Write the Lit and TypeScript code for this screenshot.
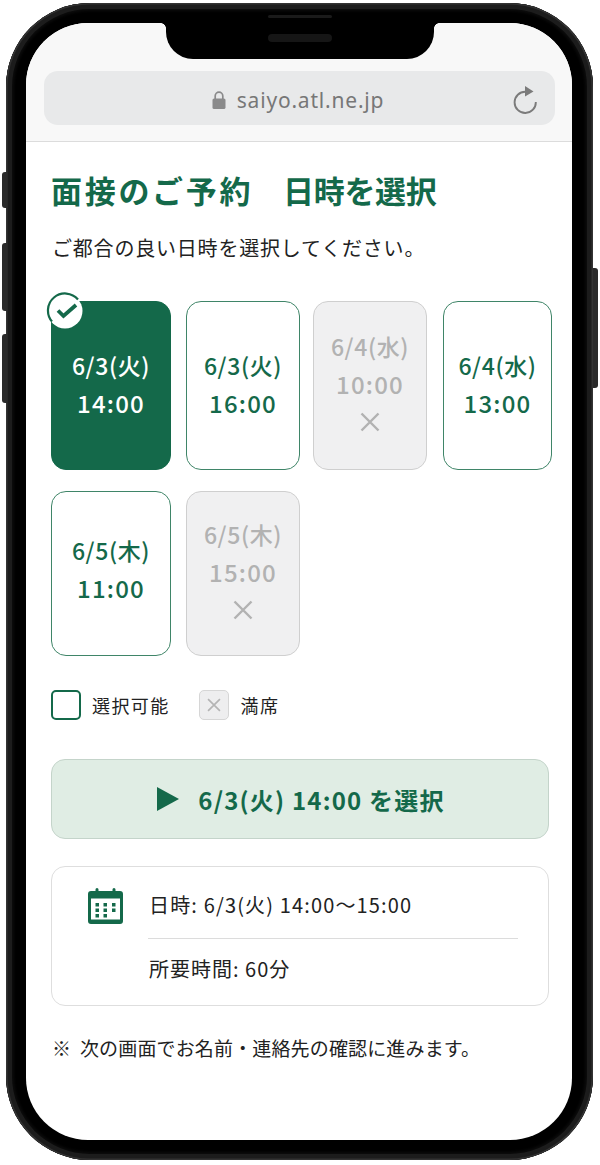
import { LitElement, html, css, nothing } from "lit";
import { customElement } from "lit/decorators.js";

type Slot = { d: string; t: string; kind: "sel" | "open" | "full" };
const slots: Slot[] = [
  { d: "6/3(火)", t: "14:00", kind: "sel" },
  { d: "6/3(火)", t: "16:00", kind: "open" },
  { d: "6/4(水)", t: "10:00", kind: "full" },
  { d: "6/4(水)", t: "13:00", kind: "open" },
  { d: "6/5(木)", t: "11:00", kind: "open" },
  { d: "6/5(木)", t: "15:00", kind: "full" },
];

const cross = (s: number) => html`<svg width=${s} height=${s} viewBox="0 0 20 20"><path d="M1.5 1.5 18.5 18.5M18.5 1.5 1.5 18.5" fill="none" stroke="currentColor" stroke-width="2.4"/></svg>`;

@customElement("app-root")
export class AppRoot extends LitElement {
  static styles = css`
    :host { display: block; width: 600px; height: 1165px; position: relative; overflow: hidden; background: #fff;
      font-family: "Noto Sans CJK JP", "Noto Sans", sans-serif; color: #222; }
    .phone { box-sizing: border-box; width: 587px; height: 1157px; margin: 3px 0 0 6px; position: relative;
      padding: 20px 21px 20px 20px; border-radius: 84px; background: #000;
      box-shadow: inset 0 0 0 1.5px #333, inset 0 0 0 6px #1c1c1c, inset 0 0 3px 8px #0c0c0c; }
    .side { position: absolute; width: 5px; background: #2a2a2a; }
    .l { left: -4px; border-radius: 3px 0 0 3px; }
    .r { right: -5px; border-radius: 0 3px 3px 0; top: 265px; height: 120px; }
    .v1 { top: 169px; height: 36px; } .v2 { top: 240px; height: 68px; } .v3 { top: 331px; height: 69px; }
    .bezel-line { position: absolute; left: 262px; top: 12px; width: 64px; height: 3px; border-radius: 2px; background: #1a1a1a; }
    .screen { height: 100%; border-radius: 62px; overflow: hidden; background: #fff; position: relative; }
    .notch { position: absolute; left: 140px; top: 0; width: 268px; height: 36px; background: #000; border-radius: 0 0 27px 27px; }
    .notch::before, .notch::after { content: ""; position: absolute; top: 0; width: 5px; height: 5px; }
    .notch::before { left: -5px; background: radial-gradient(circle at 0 100%, transparent 4.5px, #000 5px); }
    .notch::after { right: -5px; background: radial-gradient(circle at 100% 100%, transparent 4.5px, #000 5px); }
    .speaker { position: absolute; left: 102px; top: 11px; width: 64px; height: 8px; border-radius: 4px; background: #161616; }
    .top { box-sizing: border-box; height: 119px; background: #f8f8f8; border-bottom: 1px solid #dcdcdc; padding: 48px 17px 0 18px; }
    .url { box-sizing: border-box; height: 54px; border-radius: 14px; background: #e8e9ea; display: flex; align-items: center; position: relative; justify-content: center; color: #777; font-size: 21px; letter-spacing: 0.8px; gap: 11px; padding: 4px 3px 0 0; font-family: "Noto Sans", sans-serif; }
    .url svg.lock { flex: none; }
    .reload { position: absolute; right: 17px; top: 15px; }
    .body { padding: 29px 20px 0 25px; }
    h1 { margin: 0; font-size: 31px; line-height: 38px; font-weight: 700; color: #14694a; white-space: nowrap; display: flex; }
    h1 .a { letter-spacing: 2.7px; width: 232px; }
    h1 .b { letter-spacing: -0.3px; }
    .sub { margin: 24px 0 0 1px; font-size: 20px; line-height: 30px; letter-spacing: 0.8px; white-space: nowrap; }
    .grid { margin-top: 38px; display: grid; grid-template-columns: 135px 127px 130px 109px; grid-template-rows: 169px 165px; row-gap: 21px; }
    .card { box-sizing: border-box; width: 114px; border-radius: 15px; border: 1.5px solid #3f8568; color: #14694a; display: flex; flex-direction: column; align-items: center; justify-content: center; position: relative; font-size: 23px; font-weight: 500; line-height: 38px; letter-spacing: 0.6px; padding-bottom: 4px; }
    .card:nth-child(4n+1) { width: 120px; }
    .card:nth-child(4) { width: 109px; }
    .card:nth-child(5) { padding-bottom: 10px; }
    .card .t { font-size: 24px; letter-spacing: 1.2px; font-weight: 500; }
    .card.sel { background: #14694a; border-color: #14694a; color: #fff; }
    .card.full { background: #f0f0f1; border-color: #cfcfcf; color: #b2b2b2; padding-bottom: 11px; }
    .card.full svg.x { margin-top: 9px; display: block; margin-bottom: 2px; }
    .check { position: absolute; left: -6.5px; top: -10px; }
    .legend { margin-top: 34px; display: flex; align-items: center; font-size: 18px; line-height: 30px; letter-spacing: 1.4px; }
    .box { box-sizing: border-box; width: 30px; height: 30px; border-radius: 5px; border: 2.5px solid #14694a; background: #fff; margin-right: 11px; flex: none; }
    .box.fx { border: 1px solid #d6d6d6; background: #eeeeef; color: #b4b4b4; display: flex; align-items: center; justify-content: center; margin-left: 29px; margin-right: 12px; }
    .cta { box-sizing: border-box; margin-top: 39px; width: 498px; height: 80px; background: #e0ede4; border: 1.5px solid #c4d4ca; border-radius: 14px; display: flex; align-items: center; justify-content: center; gap: 19px; color: #14694a; font-size: 24px; font-weight: 700; letter-spacing: 1.2px; padding-left: 2px; }
    .info { box-sizing: border-box; margin-top: 27px; width: 498px; height: 140px; border: 1.5px solid #dedede; border-radius: 14px; display: flex; padding: 21px 30px 0 36px; }
    .info svg { flex: none; }
    .rows { flex: 1; margin-left: 25px; font-size: 20px; line-height: 30px; letter-spacing: 1px; }
    .r1 { padding: 2px 0 18px 1px; border-bottom: 1px solid #dcdcdc; white-space: nowrap; letter-spacing: 1.15px; }
    .r2 { padding: 15px 0 0 1px; white-space: nowrap; }
    .note { margin: 27px 0 0 1px; font-size: 19px; line-height: 30px; letter-spacing: 0.15px; white-space: pre; }
  `;

  private card(s: Slot) {
    return html`<div class="card ${s.kind}">
      ${s.kind === "sel" ? html`<svg class="check" width="38" height="38" viewBox="0 0 38 38"><circle cx="19" cy="19" r="17.5" fill="#fff"/><path d="M32 7.5A17 17 0 0 0 6 29.5" fill="none" stroke="#14694a" stroke-width="2.2"/><path d="M12 18.5 17.5 24 30 13" fill="none" stroke="#14694a" stroke-width="3.8"/></svg>` : nothing}
      <div>${s.d}</div><div class="t">${s.t}</div>
      ${s.kind === "full" ? html`<svg class="x" width="20" height="20" viewBox="0 0 20 20"><path d="M1.5 1.5 18.5 18.5M18.5 1.5 1.5 18.5" fill="none" stroke="currentColor" stroke-width="2.4"/></svg>` : nothing}
    </div>`;
  }

  render() {
    return html`<div class="phone">
      <i class="side l v1"></i><i class="side l v2"></i><i class="side l v3"></i><i class="side r"></i>
      <i class="bezel-line"></i>
      <div class="screen">
        <div class="top">
          <div class="url">
            <svg class="lock" width="14" height="18" viewBox="0 0 14 18"><path d="M3.2 8V5a3.8 3.8 0 0 1 7.6 0v3" fill="none" stroke="#8a8a8b" stroke-width="1.7"/><rect x="0.5" y="7.5" width="13" height="10.5" rx="1.6" fill="#8a8a8b"/></svg>
            <span>saiyo.atl.ne.jp</span>
            <svg class="reload" width="26" height="28" viewBox="0 0 26 28"><path d="M13.5 5.8A10.6 10.6 0 1 0 23.8 16" fill="none" stroke="#7b7b7b" stroke-width="1.9"/><path d="M13 0 21.5 5.5 13 10.5Z" fill="#7b7b7b"/></svg>
          </div>
        </div>
        <div class="body">
          <h1><span class="a">面接のご予約</span><span class="b">日時を選択</span></h1>
          <p class="sub">ご都合の良い日時を選択してください。</p>
          <div class="grid">${slots.map((s) => this.card(s))}</div>
          <div class="legend">
            <span class="box"></span><span>選択可能</span>
            <span class="box fx">${cross(14)}</span><span>満席</span>
          </div>
          <div class="cta">
            <svg width="22" height="24" viewBox="0 0 22 24"><path d="M0 0 22 12 0 24Z" fill="#14694a"/></svg>
            <span>6/3(火) 14:00 を選択</span>
          </div>
          <div class="info">
            <svg width="35" height="36" viewBox="0 0 35 36"><path d="M3 3H7.500V1.500a1.500 1.500 0 0 1 3 0V3H24.500V1.500a1.500 1.500 0 0 1 3 0V3H32a3 3 0 0 1 3 3V33a3 3 0 0 1-3 3H3a3 3 0 0 1-3-3V6a3 3 0 0 1 3-3Z" fill="#14694a"/><rect x="3" y="10.500" width="29" height="21" fill="#fff"/><path fill="#14694a" d="M7.500 15h3.500v3.500H7.500zM15.500 15h3.500v3.500h-3.500zM24 15h3.500v3.500H24zM7.500 20.500h3.500v3.500H7.500zM15.500 20.500h3.500v3.500h-3.500zM24 20.500h3.500v3.500H24zM7.500 26h3.500v3.500H7.500zM15.500 26h3.500v3.500h-3.500z"/></svg>
            <div class="rows">
              <div class="r1">日時: 6/3(火) 14:00〜15:00</div>
              <div class="r2">所要時間: 60分</div>
            </div>
          </div>
          <p class="note">※  次の画面でお名前・連絡先の確認に進みます。</p>
        </div>
        <div class="notch"><span class="speaker"></span></div>
      </div>
    </div>`;
  }
}
